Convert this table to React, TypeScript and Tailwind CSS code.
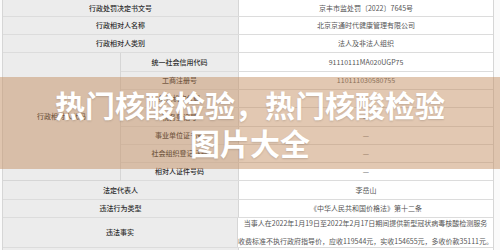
// App.tsx — 行政处罚公示表 + 标题横幅
//
// 表格是截图背景，横幅半透明覆盖在表格中段。

const FONT = "font-['Noto_Sans_CJK_SC','Noto_Sans',sans-serif]";

type Row = { label: string; value: string; h: string };

const TOP_ROWS: Row[] = [
  { label: "行政处罚决定书文号", value: "京丰市监处罚〔2022〕7645号", h: "h-[17px]" },
  { label: "行政相对人名称", value: "北京京通时代健康管理有限公司", h: "h-[18px]" },
  { label: "行政相对人类别", value: "法人及非法人组织", h: "h-[18px]" },
];

const CODE_ROWS: Row[] = [
  { label: "统一社会信用代码", value: "91110111MA020UGP75", h: "h-[19px]" },
  { label: "工商注册号", value: "110111030580755", h: "h-[18px]" },
  { label: "组织机构代码", value: "—", h: "h-[18px]" },
  { label: "税务登记号", value: "—", h: "h-[19px]" },
  { label: "事业单位证书号", value: "—", h: "h-[18px]" },
  { label: "社会组织登记证号", value: "—", h: "h-[18px]" },
  { label: "相对人证件号码", value: "—", h: "h-[18px]" },
];

const BOTTOM_ROWS: Row[] = [
  { label: "法定代表人", value: "李岳山", h: "h-[19px]" },
  { label: "违法行为类型", value: "《中华人民共和国价格法》第十二条", h: "h-[18px]" },
];

function PlainRow({ row }: { row: Row }) {
  return (
    <div className={`flex ${row.h} border-b border-[#dcdcdc]`}>
      <div className="w-[236px] flex items-center justify-center bg-[#ececec] border-r border-[#d6d6d6] text-[#2e2e2e] font-medium">
        {row.label}
      </div>
      <div className="flex-1 flex items-center justify-center text-[#555]">{row.value}</div>
    </div>
  );
}

export default function App() {
  return (
    <div className={`relative w-[500px] h-[250px] overflow-hidden bg-[#fafafa] text-[7px] leading-none ${FONT}`}>
      <div className="ml-[2px] w-[492px] bg-white border-l border-r border-[#d6d6d6]">
        {TOP_ROWS.map((r) => (
          <PlainRow key={r.label} row={r} />
        ))}

        {/* 行政相对人代码 — 7 个子行 */}
        <div className="flex">
          <div className="w-[118px] flex items-center justify-center bg-[#ececec] border-r border-b border-[#d6d6d6] text-[#2e2e2e] font-medium">
            行政相对人代码
          </div>
          <div className="flex-1 flex flex-col">
            {CODE_ROWS.map((r) => (
              <div key={r.label} className={`flex ${r.h} border-b border-[#dcdcdc]`}>
                <div className="w-[118px] flex items-center justify-center bg-[#ececec] border-r border-[#d6d6d6] text-[#2e2e2e] font-medium">
                  {r.label}
                </div>
                <div className="flex-1 flex items-center justify-center text-[#555]">{r.value}</div>
              </div>
            ))}
          </div>
        </div>

        {BOTTOM_ROWS.map((r) => (
          <PlainRow key={r.label} row={r} />
        ))}

        <div className="flex h-[30px] border-b border-[#dcdcdc]">
          <div className="w-[236px] flex items-center justify-center bg-[#ececec] border-r border-[#d6d6d6] text-[#2e2e2e] font-medium">
            违法事实
          </div>
          <div className="flex-1 flex flex-col items-center justify-center gap-[11px] text-[#555] whitespace-nowrap">
            <span>当事人在2022年1月19日至2022年2月17日期间提供新型冠状病毒核酸检测服务</span>
            <span>收费标准不执行政府指导价，应收119544元，实收154655元，多收价款35111元。</span>
          </div>
        </div>
        <div className="flex h-[20px]">
          <div className="w-[236px] bg-[#ececec] border-r border-[#d6d6d6]" />
          <div className="flex-1" />
        </div>
      </div>

      {/* 标题横幅 */}
      <div className="absolute left-0 right-0 top-[77px] h-[92px] flex flex-col items-center justify-center bg-[rgba(195,140,95,0.48)]">
        <div className="text-[30px] leading-[38px] font-bold text-white [text-shadow:0_1px_2px_rgba(0,0,0,0.15)]">
          热门核酸检验，热门核酸检验
        </div>
        <div className="text-[30px] leading-[38px] font-bold text-white [text-shadow:0_1px_2px_rgba(0,0,0,0.15)]">
          图片大全
        </div>
      </div>
    </div>
  );
}
